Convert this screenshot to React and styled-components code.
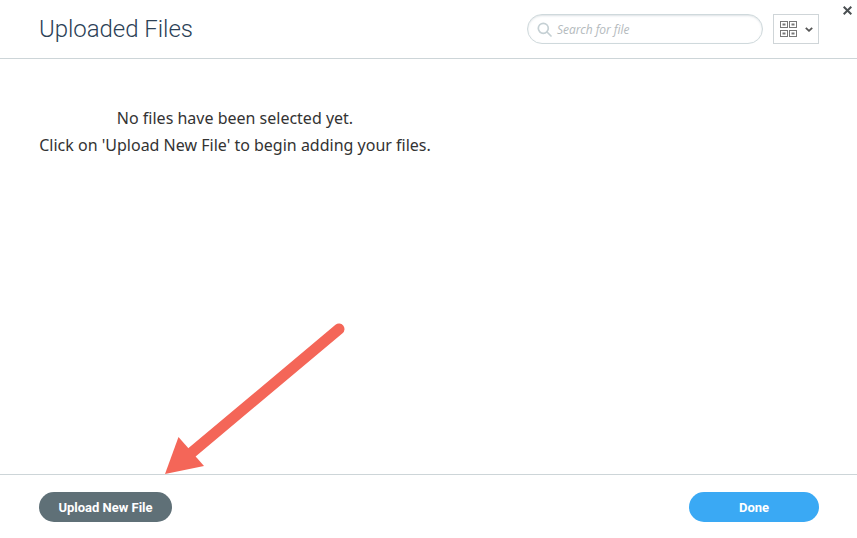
import React from 'react';
import styled, { createGlobalStyle } from 'styled-components';

const Global = createGlobalStyle`
  html, body { margin: 0; padding: 0; background: #fff; }
  #root { width: 857px; height: 538px; }
  * { box-sizing: border-box; }
`;

const Dialog = styled.div`
  position: relative;
  width: 857px;
  height: 538px;
  display: flex;
  flex-direction: column;
  background: #fff;
  overflow: hidden;
`;

const Header = styled.header`
  height: 59px;
  flex: none;
  display: flex;
  align-items: flex-start;
  padding: 14px 38px 0 39px;
  border-bottom: 1px solid #cdd5d8;
`;

const Title = styled.h1`
  margin: 0;
  flex: 1;
  font: 300 24px/30px Roboto, sans-serif;
  color: #2c4156;
  letter-spacing: -0.05px;
`;

const SearchBox = styled.div`
  width: 236px;
  height: 30px;
  display: flex;
  align-items: center;
  gap: 5px;
  padding-left: 9px;
  border: 1px solid #cfd9dc;
  border-radius: 15px;
  box-shadow: inset 0 1px 2px rgba(120, 140, 150, 0.25);
`;

const SearchText = styled.span`
  padding-top: 1px;
  font: italic 400 12px/16px "Open Sans", sans-serif;
  color: #b4babd;
  letter-spacing: -0.05px;
`;

const ViewToggle = styled.div`
  width: 46px;
  height: 30px;
  margin-left: 10px;
  display: flex;
  align-items: center;
  gap: 8px;
  padding-left: 6px;
  border: 1px solid #cfd5d8;
`;

const Close = styled.svg`
  position: absolute;
  top: 6px;
  right: 5px;
`;

const Body = styled.main`
  flex: 1;
  padding-top: 46px;
  padding-left: 39px;
`;

const Message = styled.p`
  margin: 0;
  width: 392px;
  text-align: center;
  font: 400 16px/27px "Noto Sans", sans-serif;
  color: #333;
`;

const Footer = styled.footer`
  height: 64px;
  flex: none;
  display: flex;
  justify-content: space-between;
  align-items: flex-start;
  padding: 17px 38px 0 39px;
  border-top: 1px solid #cdd5d8;
`;

const PillButton = styled.button`
  height: 30px;
  width: ${p => p.$width}px;
  padding: 1px 0 0;
  border: none;
  border-radius: 15px;
  background: ${p => p.$color};
  color: #fff;
  font: 700 13px/29px Roboto, sans-serif;
`;

const Arrow = styled.svg`
  position: absolute;
  left: 150px;
  top: 310px;
`;

function SearchIcon() {
  return (
    <svg width="15" height="15" viewBox="0 0 15 15" fill="none" stroke="#c5d0d4" strokeWidth="1.7">
      <circle cx="6.3" cy="6.3" r="5" />
      <path d="M10 10l4 4" strokeLinecap="round" />
    </svg>
  );
}

function GridIcon() {
  return (
    <svg width="17" height="16" viewBox="0 0 17 16" fill="none" stroke="#777" strokeWidth="1">
      <rect x="0.5" y="0.500" width="7" height="6" />
      <rect x="9.5" y="0.500" width="7" height="6" />
      <rect x="0.5" y="9.500" width="7" height="6" />
      <rect x="9.5" y="9.500" width="7" height="6" />
      <g fill="#777" stroke="none">
        <rect x="2.5" y="2.500" width="3" height="2" />
        <rect x="11.5" y="2.500" width="3" height="2" />
        <rect x="2.5" y="11.500" width="3" height="2" />
        <rect x="11.5" y="11.500" width="3" height="2" />
      </g>
    </svg>
  );
}

function Chevron() {
  return (
    <svg width="8" height="5" viewBox="0 0 8 5" fill="none" stroke="#555" strokeWidth="1.8">
      <path d="M0.8 0.8L4 3.8L7.2 0.8" />
    </svg>
  );
}

export default function App() {
  return (
    <Dialog>
      <Global />
      <Header>
        <Title>Uploaded Files</Title>
        <SearchBox>
          <SearchIcon />
          <SearchText>Search for file</SearchText>
        </SearchBox>
        <ViewToggle>
          <GridIcon />
          <Chevron />
        </ViewToggle>
      </Header>
      <Close width="9" height="9" viewBox="0 0 9 9" stroke="#4a4f52" strokeWidth="2">
        <path d="M0.7 0.7L8.3 8.3M8.3 0.7L0.7 8.3" />
      </Close>
      <Body>
        <Message>
          No files have been selected yet.
          <br />
          Click on 'Upload New File' to begin adding your files.
        </Message>
      </Body>
      <Footer>
        <PillButton $width={133} $color="#5f7077">Upload New File</PillButton>
        <PillButton $width={130} $color="#3aa9f4">Done</PillButton>
      </Footer>
      <Arrow width="200" height="170" viewBox="150 310 200 170">
        <path d="M339 329L190 454" stroke="#f46658" strokeWidth="11" strokeLinecap="round" fill="none" />
        <path d="M165 474L178.500 437L204 466Z" fill="#f46658" />
      </Arrow>
    </Dialog>
  );
}
